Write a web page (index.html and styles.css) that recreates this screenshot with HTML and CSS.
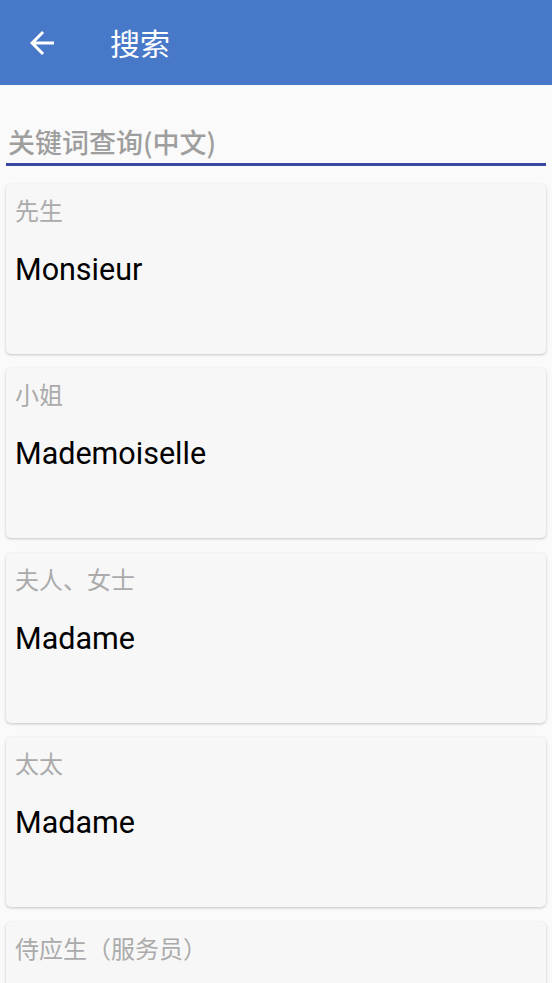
FILE: index.html
```html
<!DOCTYPE html>
<html lang="zh-CN">
<head>
  <meta charset="UTF-8" />
  <title>搜索</title>
  <link rel="stylesheet" href="styles.css">
</head>
<body>
  <div class="toolbar">
    <svg class="back-icon" viewBox="0 0 24 24" aria-label="back">
      <path d="M20 11H7.83l5.59-5.59L12 4l-8 8 8 8 1.41-1.41L7.83 13H20v-2z" fill="#fff" />
    </svg>
    <div class="toolbar-title">搜索</div>
  </div>

  <div class="search-box">
    <input type="text" class="search-input" placeholder="关键词查询(中文)" />
  </div>

  <div class="word-list">
    <div class="word-card">
      <div class="word-zh">先生</div>
      <div class="word-fr">Monsieur</div>
    </div>
    <div class="word-card">
      <div class="word-zh">小姐</div>
      <div class="word-fr">Mademoiselle</div>
    </div>
    <div class="word-card">
      <div class="word-zh">夫人、女士</div>
      <div class="word-fr">Madame</div>
    </div>
    <div class="word-card">
      <div class="word-zh">太太</div>
      <div class="word-fr">Madame</div>
    </div>
    <div class="word-card">
      <div class="word-zh">侍应生（服务员）</div>
    </div>
  </div>
</body>
</html>
```

FILE: styles.css
```css
body {
  margin: 0;
  padding: 0;
  background: #fafafa;
  font-family: Roboto, "Noto Sans CJK SC", sans-serif;
  overflow: hidden;
  height: 983px;
}

.toolbar {
  height: 85px;
  background: #4879c9;
  display: flex;
  align-items: center;
  padding-left: 24px;
}

.back-icon {
  width: 36px;
  height: 36px;
  margin-top: 1px;
}

.toolbar-title {
  margin-left: 50px;
  color: #fff;
  font-size: 30px;
  font-family: "Noto Sans CJK SC", sans-serif;
  line-height: 40px;
  margin-top: -2px;
}

.search-box {
  padding: 35px 6px 12px;
}

.search-input {
  display: block;
  width: 100%;
  box-sizing: border-box;
  height: 46px;
  margin: 0;
  padding: 0 2px;
  border: none;
  border-bottom: 3px solid #3949a3;
  background: transparent;
  font-size: 27px;
  font-weight: 500;
  font-family: "Noto Sans CJK SC", Roboto, sans-serif;
  outline: none;
}

.search-input::placeholder {
  color: #9e9e9e;
}

.word-list {
  padding: 6px 6px 0;
  display: flex;
  flex-direction: column;
  gap: 14.4px;
}

.word-card {
  height: 170px;
  box-sizing: border-box;
  padding: 8px 9px 0;
  background: #f7f7f7;
  border-radius: 5px;
  box-shadow: 0 1px 3px rgba(0, 0, 0, 0.22);
  flex-shrink: 0;
}

.word-zh {
  font-family: "Noto Sans CJK SC", sans-serif;
  font-size: 24px;
  line-height: 36px;
  color: #ababab;
}

.word-fr {
  margin-top: 22px;
  font-size: 30.5px;
  line-height: 40px;
  color: #000;
}
```
